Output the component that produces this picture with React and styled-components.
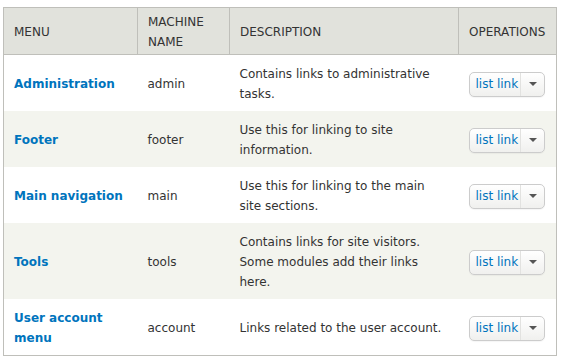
import React from 'react';
import styled, { createGlobalStyle } from 'styled-components';

/* -------------------------  STYLES ------------------------- */

const GlobalStyle = createGlobalStyle`
  body {
    margin: 0;
    background: #fff;
    font-family: "DejaVu Sans", Verdana, sans-serif;
    color: #333;
  }
`;

const Page = styled.div`
  padding: 7px 7px 0 3px;
`;

const Table = styled.table`
  width: 553px;
  border-collapse: collapse;
  table-layout: fixed;
  border: 1px solid #bfbfba;
  font-size: 12px;
  line-height: 20px;
`;

const Th = styled.th`
  background: #e1e2dc;
  border: 1px solid #bfbfba;
  padding: 4px 10px 2px;
  height: 39px;
  font-size: 12px;
  font-weight: normal;
  text-align: left;
  text-transform: uppercase;
  color: #333;
`;

const Tr = styled.tr`
  background: ${(p) => (p.$even ? '#f3f4ee' : '#fff')};
`;

const Td = styled.td`
  padding: 9px 10px 7px;
  height: ${(p) => p.$h}px;
  vertical-align: middle;
`;

const MenuLink = styled.a`
  color: #0074bd;
  font-weight: bold;
  text-decoration: none;
`;

const DropButton = styled.div`
  display: inline-flex;
  align-items: stretch;
  height: 23px;
  border: 1px solid #ccc;
  border-radius: 5px;
  background: linear-gradient(#fff, #f0f0ee);
  box-shadow: 0 1px 1px rgba(0, 0, 0, 0.04);
  white-space: nowrap;
`;

const DropMain = styled.a`
  display: flex;
  align-items: center;
  padding: 0 2px 0 6px;
  color: #0074bd;
  text-decoration: none;
  font-size: 12px;
  border-right: 1px solid #e2e2e0;
`;

const DropToggle = styled.span`
  display: flex;
  align-items: center;
  justify-content: center;
  width: 23px;

  &::after {
    content: '';
    border-left: 4px solid transparent;
    border-right: 4px solid transparent;
    border-top: 4px solid #555;
  }
`;

/* -------------------------  DATA ------------------------- */

const menus = [
  { title: 'Administration', name: 'admin', desc: 'Contains links to administrative tasks.', h: 56 },
  { title: 'Footer', name: 'footer', desc: 'Use this for linking to site information.', h: 56 },
  { title: 'Main navigation', name: 'main', desc: 'Use this for linking to the main site sections.', h: 56 },
  { title: 'Tools', name: 'tools', desc: 'Contains links for site visitors. Some modules add their links here.', h: 76 },
  { title: 'User account menu', name: 'account', desc: 'Links related to the user account.', h: 56 },
];

/* -------------------------  RENDER ------------------------- */

const App = () => (
  <Page>
    <GlobalStyle />
    <Table>
      <colgroup>
        <col style={{ width: 134 }} />
        <col style={{ width: 92 }} />
        <col style={{ width: 229 }} />
        <col style={{ width: 98 }} />
      </colgroup>
      <thead>
        <tr>
          <Th>Menu</Th>
          <Th>Machine name</Th>
          <Th>Description</Th>
          <Th>Operations</Th>
        </tr>
      </thead>
      <tbody>
        {menus.map((m, i) => (
          <Tr key={m.name} $even={i % 2 === 1}>
            <Td $h={m.h - 16}>
              <MenuLink href="#">{m.title}</MenuLink>
            </Td>
            <Td>{m.name}</Td>
            <Td>{m.desc}</Td>
            <Td>
              <DropButton>
                <DropMain href="#">list link</DropMain>
                <DropToggle />
              </DropButton>
            </Td>
          </Tr>
        ))}
      </tbody>
    </Table>
  </Page>
);

export default App;
